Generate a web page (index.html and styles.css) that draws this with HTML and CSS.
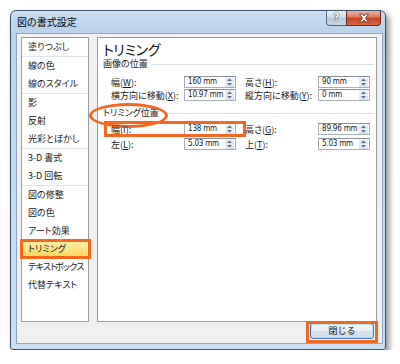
FILE: index.html
```html
<!DOCTYPE html>
<html lang="ja">
<head>
<meta charset="utf-8">
<link rel="stylesheet" href="styles.css">
</head>
<body>
<div class="stage">
  <div class="window">
    <div class="titlebar">
      <span class="title">図の書式設定</span>
      <div class="caption-btns">
        <div class="cbtn help">?</div>
        <div class="cbtn close">
          <svg width="14" height="10" viewBox="0 0 14 10"><path d="M2.5 1h3l1.5 2 1.5-2h3l-3 4 3 4h-3L7 7 5.5 9h-3l3-4z" fill="#fff" stroke="#5a2418" stroke-width="0.8"/></svg>
        </div>
      </div>
    </div>
    <div class="client">
      <div class="main">
        <ul class="nav">
          <li class="gend">塗りつぶし</li>
          <li>線の色</li>
          <li class="gend">線のスタイル</li>
          <li>影</li>
          <li>反射</li>
          <li class="gend">光彩とぼかし</li>
          <li>3-D 書式</li>
          <li class="gend">3-D 回転</li>
          <li>図の修整</li>
          <li>図の色</li>
          <li>アート効果</li>
          <li class="sel">トリミング</li>
          <li class="tight">テキスト ボックス</li>
          <li>代替テキスト</li>
        </ul>
        <div class="panel">
          <div class="ptitle">トリミング</div>
          <div class="glabel">画像の位置</div>
          <div class="row r1">
            <span class="lbl">幅(<u>W</u>):</span>
            <div class="field"><span class="val">160 mm</span><span class="spin"><svg width="9" height="10" viewBox="0 0 9 10"><path d="M2 4h5L4.5 1.5z M2 6h5L4.5 8.5z" fill="#5b6e8c"/></svg></span></div>
            <span class="lbl lbl2">高さ(<u>H</u>):</span>
            <div class="field"><span class="val">90 mm</span><span class="spin"><svg width="9" height="10" viewBox="0 0 9 10"><path d="M2 4h5L4.5 1.5z M2 6h5L4.5 8.5z" fill="#5b6e8c"/></svg></span></div>
          </div>
          <div class="row r2">
            <span class="lbl">横方向に移動(<u>X</u>):</span>
            <div class="field"><span class="val">10.97 mm</span><span class="spin"><svg width="9" height="10" viewBox="0 0 9 10"><path d="M2 4h5L4.5 1.5z M2 6h5L4.5 8.5z" fill="#5b6e8c"/></svg></span></div>
            <span class="lbl lbl2">縦方向に移動(<u>Y</u>):</span>
            <div class="field"><span class="val">0 mm</span><span class="spin"><svg width="9" height="10" viewBox="0 0 9 10"><path d="M2 4h5L4.5 1.5z M2 6h5L4.5 8.5z" fill="#5b6e8c"/></svg></span></div>
          </div>
          <div class="glabel g2">トリミング位置</div>
          <div class="row r3">
            <span class="lbl">幅(<u>I</u>):</span>
            <div class="field"><span class="val">138 mm</span><span class="spin"><svg width="9" height="10" viewBox="0 0 9 10"><path d="M2 4h5L4.5 1.5z M2 6h5L4.5 8.5z" fill="#5b6e8c"/></svg></span></div>
            <span class="lbl lbl2">高さ(<u>G</u>):</span>
            <div class="field"><span class="val">89.96 mm</span><span class="spin"><svg width="9" height="10" viewBox="0 0 9 10"><path d="M2 4h5L4.5 1.5z M2 6h5L4.5 8.5z" fill="#5b6e8c"/></svg></span></div>
          </div>
          <div class="row r4">
            <span class="lbl">左(<u>L</u>):</span>
            <div class="field"><span class="val">5.03 mm</span><span class="spin"><svg width="9" height="10" viewBox="0 0 9 10"><path d="M2 4h5L4.5 1.5z M2 6h5L4.5 8.5z" fill="#5b6e8c"/></svg></span></div>
            <span class="lbl lbl2">上(<u>T</u>):</span>
            <div class="field"><span class="val">5.03 mm</span><span class="spin"><svg width="9" height="10" viewBox="0 0 9 10"><path d="M2 4h5L4.5 1.5z M2 6h5L4.5 8.5z" fill="#5b6e8c"/></svg></span></div>
          </div>
        </div>
      </div>
      <div class="footer">
        <button class="btn">閉じる</button>
      </div>
    </div>
  </div>
</div>
</body>
</html>
```
FILE: styles.css
```css
* { box-sizing: border-box; }
body {
  margin: 0;
  background: #fff;
  font-family: "Noto Sans CJK JP", "Noto Sans", sans-serif;
  font-feature-settings: "palt";
  color: #1a1a1a;
}
.stage { padding: 10px 0 0 10px; }
.window {
  width: 376px;
  height: 340px;
  border: 1px solid #40536b;
  border-radius: 6px 6px 3px 3px;
  background: linear-gradient(180deg, #c9ddf2 0, #b9d1ea 22px, #c6dbf1 60%, #cadef2 100%);
  box-shadow: 3px 4px 6px rgba(0, 0, 0, 0.45);
  display: flex;
  flex-direction: column;
  padding: 0 2px 5px 5px;
}
.titlebar {
  height: 22px;
  display: flex;
  align-items: flex-start;
}
.title {
  font-size: 10px;
  line-height: 12px;
  margin-top: 5px;
  margin-left: 1px;
  color: #000;
}
.caption-btns {
  margin-left: auto;
  margin-right: 2px;
  display: flex;
}
.cbtn {
  height: 15px;
  border: 1px solid #56677c;
  border-top: none;
  display: flex;
  align-items: center;
  justify-content: center;
}
.help {
  width: 20px;
  border-right: none;
  border-radius: 0 0 0 4px;
  background: linear-gradient(180deg, #e9eff6 0, #d3dde9 45%, #b7c6d7 50%, #c9d6e4 100%);
  color: #fff;
  font-family: "DejaVu Sans", sans-serif;
  font-weight: bold;
  font-size: 10px;
  line-height: 10px;
  text-shadow: 0 0 1px #34404f, 0 0 1px #34404f, 0 0 1px #34404f;
}
.close {
  width: 35px;
  border-radius: 0 0 4px 0;
  border-color: #6a2a1d;
  background: linear-gradient(180deg, #eab0a0 0, #d97a62 45%, #c63f25 50%, #d8684a 100%);
}
.client {
  flex: 1;
  background: #f0f0f0;
  border: 1px solid #8fa6c3;
  padding: 3px 5px 0 4px;
  display: flex;
  flex-direction: column;
}
.main {
  display: flex;
  gap: 8px;
  height: 285px;
}
.nav {
  width: 68px;
  margin: 0;
  padding: 0;
  list-style: none;
  background: #fff;
  border: 1px solid #9c9c9c;
}
.nav li {
  height: 18px;
  line-height: 18px;
  padding-left: 6px;
  font-size: 9px;
  white-space: nowrap;
  overflow: visible;
}
.nav li.tight { letter-spacing: -0.7px; word-spacing: -3px; }
.nav li.gend {
  height: 19px;
  border-bottom: 1px solid #dde6ef;
}
.nav li.sel {
  position: relative;
  margin: 0 1px;
  padding-left: 5px;
  background: linear-gradient(180deg, #fdf0b4 0, #fde48a 45%, #fbd350 100%);
}
.nav li.sel::after {
  content: "";
  position: absolute;
  left: -3px;
  right: -4px;
  top: -1px;
  bottom: -1px;
  border: 3px solid #f3671f;
}
.panel {
  flex: 1;
  background: #fff;
  border: 1px solid #9c9c9c;
  padding: 3px 5px 0 5px;
}
.ptitle {
  font-size: 14px;
  line-height: 16px;
  height: 17px;
  letter-spacing: -0.4px;
  color: #111;
}
.glabel {
  display: flex;
  align-items: center;
  gap: 3px;
  font-size: 9px;
  line-height: 12px;
  height: 12px;
  margin-right: -3px;
  position: relative;
}
.glabel::after {
  content: "";
  flex: 1;
  height: 1px;
  background: #d7e0e9;
}
.g2 { margin-top: 6px; }
.g2::before {
  content: "";
  position: absolute;
  left: -14px;
  top: -4px;
  width: 73px;
  height: 19px;
  border: 3px solid #f3671f;
  border-radius: 50%;
}
.row {
  display: flex;
  align-items: center;
  height: 12px;
  padding-left: 8px;
  font-size: 9px;
  position: relative;
}
.row u { text-decoration: underline; text-underline-offset: 1px; }
.r1 { margin-top: 6px; }
.r2 { margin-top: 1px; }
.r3 { margin-top: 4px; }
.r4 { margin-top: 3px; }
.r3::after {
  content: "";
  position: absolute;
  left: 1px;
  width: 136px;
  top: -2px;
  bottom: -2px;
  border: 3px solid #f3671f;
}
.lbl {
  width: 73px;
  white-space: nowrap;
}
.lbl2 { margin-left: 9px; }
.field {
  width: 52px;
  height: 12px;
  display: flex;
  align-items: center;
  background: #fff;
  border: 1px solid #a9afb8;
  border-top-color: #8a919c;
}
.val {
  flex: 1;
  min-width: 0;
  overflow: hidden;
  white-space: nowrap;
  padding-left: 3px;
  font-family: "DejaVu Sans", sans-serif;
  font-stretch: condensed;
  font-size: 8px;
  line-height: 10px;
  letter-spacing: -0.2px;
}
.spin {
  width: 9px;
  height: 10px;
  flex: none;
  margin-right: 1px;
  display: flex;
  background: linear-gradient(180deg, #eef3f8 0, #dbe4ee 50%, #eef3f8 50%, #d5dfea 100%);
}
.footer {
  flex: 1;
  display: flex;
  justify-content: flex-end;
  align-items: flex-start;
  padding-top: 1px;
  padding-right: 3px;
}
.btn {
  position: relative;
  width: 64px;
  height: 16px;
  padding: 0;
  font-family: inherit;
  font-size: 9px;
  line-height: 14px;
  color: #111;
  border: 1px solid #3c7db3;
  border-radius: 3px;
  background: linear-gradient(180deg, #f4f8fb 0, #e8eef4 48%, #d6e1eb 52%, #cfdbe6 100%);
  box-shadow: inset 0 0 0 1px #b6e2f7;
}
.btn::after {
  content: "";
  position: absolute;
  left: -5px;
  right: -5px;
  top: -3px;
  bottom: -5px;
  border: 3px solid #f3671f;
}
```
